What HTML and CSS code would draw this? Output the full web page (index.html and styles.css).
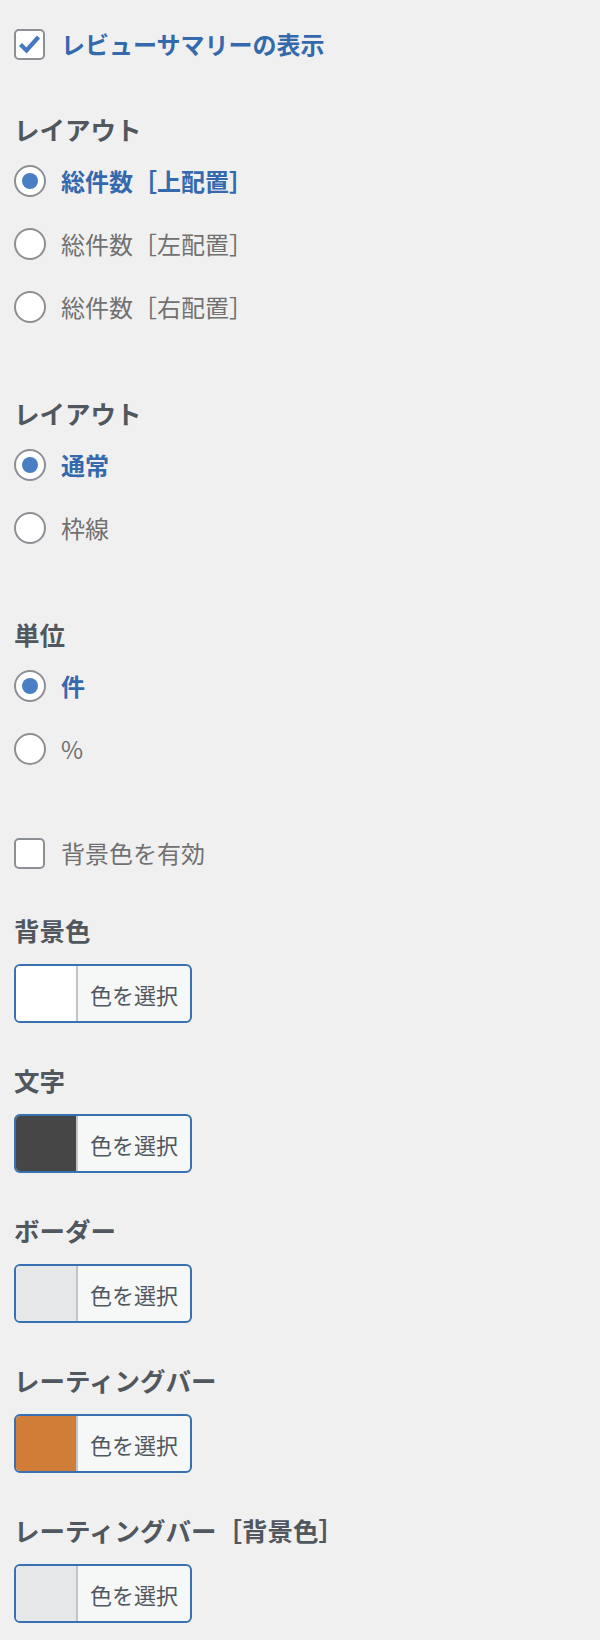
FILE: index.html
```html
<html>
  <head>
    <link rel="stylesheet" href="styles.css">
    <title>レビューサマリー設定</title>
  </head>
  <body>
    <div class="panel">
      <label class="option toggle">
        <span class="box checked">
          <svg viewBox="0 0 31 31" width="31" height="31"><polyline points="6.5,15.5 12.5,21.5 24.5,8" fill="none" stroke="#4479c0" stroke-width="4.2" stroke-linejoin="miter"/></svg>
        </span>
        <span class="label active">レビューサマリーの表示</span>
      </label>

      <div class="group">
        <h2>レイアウト</h2>
        <label class="option"><span class="radio on"></span><span class="label active">総件数［上配置］</span></label>
        <label class="option"><span class="radio"></span><span class="label">総件数［左配置］</span></label>
        <label class="option"><span class="radio"></span><span class="label">総件数［右配置］</span></label>
      </div>

      <div class="group">
        <h2>レイアウト</h2>
        <label class="option"><span class="radio on"></span><span class="label active">通常</span></label>
        <label class="option"><span class="radio"></span><span class="label">枠線</span></label>
      </div>

      <div class="group">
        <h2>単位</h2>
        <label class="option"><span class="radio on"></span><span class="label active">件</span></label>
        <label class="option"><span class="radio"></span><span class="label">%</span></label>
      </div>

      <label class="option toggle bg-toggle">
        <span class="box"></span>
        <span class="label">背景色を有効</span>
      </label>

      <div class="color first">
        <h2>背景色</h2>
        <button class="picker"><span class="swatch" style="background:#ffffff"></span><span class="pick">色を選択</span></button>
      </div>
      <div class="color">
        <h2>文字</h2>
        <button class="picker"><span class="swatch" style="background:#464646"></span><span class="pick">色を選択</span></button>
      </div>
      <div class="color">
        <h2>ボーダー</h2>
        <button class="picker"><span class="swatch" style="background:#e6e7e9"></span><span class="pick">色を選択</span></button>
      </div>
      <div class="color">
        <h2>レーティングバー</h2>
        <button class="picker"><span class="swatch" style="background:#d07e37"></span><span class="pick">色を選択</span></button>
      </div>
      <div class="color">
        <h2>レーティングバー［背景色］</h2>
        <button class="picker"><span class="swatch" style="background:#e6e7e9"></span><span class="pick">色を選択</span></button>
      </div>
    </div>
  </body>
</html>
```

FILE: styles.css
```css
body {
  margin: 0;
  background: #f0f0f0;
  font-family: "Noto Sans CJK JP", "Noto Sans", sans-serif;
}

.panel {
  padding: 28px 14px 0 14px;
  display: flex;
  flex-direction: column;
}

h2 {
  margin: 0;
  height: 30px;
  line-height: 30px;
  font-size: 25.5px;
  font-weight: 700;
  color: #50575e;
}

.option {
  display: flex;
  align-items: center;
  gap: 15px;
  height: 32px;
}

.label {
  font-size: 24px;
  line-height: 32px;
  color: #717171;
}

.label.active {
  color: #3469ad;
  font-weight: 700;
}

.toggle .label {
  margin-left: 1px;
}

.box {
  width: 31px;
  height: 31px;
  box-sizing: border-box;
  border: 2px solid #8c8f94;
  border-radius: 5px;
  background: #fff;
  position: relative;
  flex: none;
}

.box svg {
  position: absolute;
  left: -2px;
  top: -2px;
}

.radio {
  width: 32px;
  height: 32px;
  box-sizing: border-box;
  border: 2px solid #8c8f94;
  border-radius: 50%;
  background: #fff;
  display: flex;
  align-items: center;
  justify-content: center;
  flex: none;
}

.radio.on::after {
  content: "";
  width: 16px;
  height: 16px;
  border-radius: 50%;
  background: #4a7fc3;
}

.group {
  display: flex;
  flex-direction: column;
  gap: 31px;
  margin-top: 54px;
}

.group h2 {
  margin-bottom: -10px;
}

.group + .group {
  margin-top: 75px;
}

.bg-toggle {
  margin-top: 72px;
}

.color {
  display: flex;
  flex-direction: column;
  gap: 19px;
  margin-top: 42px;
}

.color.first {
  margin-top: 46px;
}

.picker {
  display: flex;
  width: 178px;
  height: 59px;
  padding: 0;
  box-sizing: border-box;
  border: 2px solid #3870b1;
  border-radius: 6px;
  background: #f6f7f7;
  overflow: hidden;
  font-family: inherit;
}

.swatch {
  width: 60px;
  height: 100%;
  border-right: 2px solid #c3c4c7;
  flex: none;
}

.pick {
  flex: 1;
  align-self: center;
  text-align: center;
  font-size: 22px;
  color: #50575e;
}
```
